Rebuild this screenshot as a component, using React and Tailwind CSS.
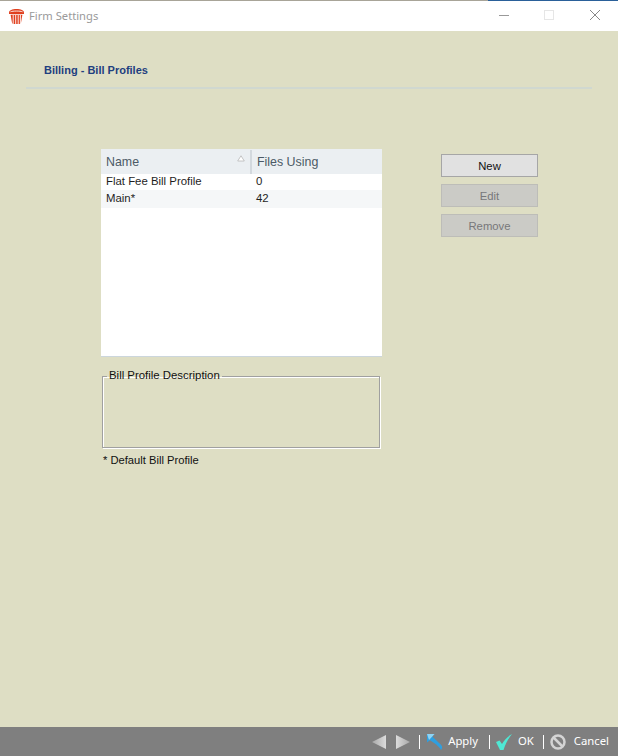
import React from "react";

const Font = '[font-family:"Liberation_Sans",Arial,sans-serif]';

function Trash() {
  return (
    <svg width="17" height="17" viewBox="0 0 17 17" className="shrink-0">
      <path d="M1 4.500C1 2.200 4.300 1 8.500 1S16 2.200 16 4.500V6H1z" fill="#e0401f" />
      <path d="M2.500 3.800c2-1 10-1 12 0" fill="none" stroke="#fff" strokeWidth="0.900" />
      <path d="M2.600 6.800h11.800L13 14.800c-.2.700-.6 1.100-1.200 1.100H5.200c-.6 0-1-.4-1.200-1.100z" fill="#e0401f" />
      <path d="M5.200 7v9M7.700 7v9M10.200 7v9M12.400 7v9" stroke="#fff" strokeWidth="0.900" />
    </svg>
  );
}

function Btn({ children, disabled }) {
  return (
    <button
      className={
        disabled
          ? "h-[23px] w-[97px] border border-[#bdbdb8] bg-[#cbcbc6] pt-[3px] text-[11.300px] leading-none text-[#77777a]"
          : "h-[23px] w-[97px] border border-[#a6a6a6] bg-[#e1e1e1] pt-[3px] text-[11.300px] leading-none text-[#111]"
      }
    >
      {children}
    </button>
  );
}

export default function App() {
  return (
    <div className={`flex h-[756px] w-[618px] flex-col overflow-hidden bg-[#dedec4] ${Font}`}>
      <div className="flex h-[31px] shrink-0 flex-col bg-white">
        <div className="flex h-px shrink-0">
          <div className="w-[488px] bg-[#a8a498]" />
          <div className="flex-1 bg-[#2a6099]" />
        </div>
        <div className="flex flex-1 items-center">
          <div className="ml-[8px] flex items-center gap-[4px]">
            <Trash />
            <span className="text-[11.200px] text-[#9a9a9a] [font-family:'Noto_Sans',sans-serif]">Firm Settings</span>
          </div>
          <div className="ml-auto flex items-center">
            <svg width="46" height="30" viewBox="0 0 46 30">
              <path d="M10 14.500h10" stroke="#999" strokeWidth="1" />
            </svg>
            <svg width="46" height="30" viewBox="0 0 46 30">
              <rect x="9.500" y="9.500" width="9" height="9" fill="none" stroke="#e6e6e6" />
            </svg>
            <svg width="37" height="30" viewBox="0 0 37 30">
              <path d="M9 9l10 10M19 9L9 19" stroke="#888" strokeWidth="1" />
            </svg>
          </div>
        </div>
      </div>

      <div className="flex min-h-0 flex-1 flex-col">
        <div className="pl-[44px] pt-[33px] text-[11px] font-bold leading-[13px] text-[#1f3f7f]">
          Billing - Bill Profiles
        </div>
        <div className="mx-[26px] mt-[10px] h-[2px] bg-[#d0d8d0]" />

        <div className="ml-[101px] mt-[60px] flex items-start">
          <div className="w-[281px]">
            <div className="h-[208px] border-b border-[#ccd6dc] bg-white text-[11.400px] leading-none text-[#1e1e1e]">
              <div className="flex h-[25px] items-center bg-[#ebeff2] pt-px text-[12.400px] text-[#4c5a66]">
                <div className="flex h-full w-[151px] items-center justify-between border-r-2 border-[#d3d9de] pl-[5px] pr-[5px]">
                  <span>Name</span>
                  <svg width="8" height="7" viewBox="0 0 8 7" className="mb-[7px]">
                    <path d="M4 .8L7.300 6H.7z" fill="#fff" stroke="#b8b8b8" strokeWidth="0.800" />
                  </svg>
                </div>
                <span className="pl-[5px]">Files Using</span>
              </div>
              <div className="flex h-[16px] items-start pt-[2px]">
                <span className="w-[151px] pl-[5px]">Flat Fee Bill Profile</span>
                <span className="pl-[4px]">0</span>
              </div>
              <div className="flex h-[18px] items-center bg-[#f5f7f8]">
                <span className="w-[151px] pl-[5px]">Main*</span>
                <span className="pl-[4px]">42</span>
              </div>
            </div>

            <fieldset className="ml-px mt-[13px] h-[78px] w-[278px] border border-[#a0a0a0] pl-[4px] [box-shadow:1px_1px_0_#fff,inset_1px_1px_0_#fff]">
              <legend className="-translate-y-px px-[2px] text-[11.400px] leading-[13px] text-[#111]">Bill Profile Description</legend>
            </fieldset>
            <div className="ml-[2px] mt-[6px] text-[11.200px] leading-[13px] text-[#111]">* Default Bill Profile</div>
          </div>

          <div className="ml-[59px] mt-[5px] flex flex-col gap-[7px]">
            <Btn>New</Btn>
            <Btn disabled>Edit</Btn>
            <Btn disabled>Remove</Btn>
          </div>
        </div>
      </div>

      <div className="flex h-[29px] shrink-0 items-center justify-end bg-[#7f7f7f] pr-[9px] text-[11.300px] text-white [font-family:'Noto_Sans',sans-serif]">
        <svg width="14" height="14" viewBox="0 0 14 14">
          <defs>
            <linearGradient id="a" x1="0" x2="1">
              <stop offset="0" stopColor="#a8a8a8" />
              <stop offset="1" stopColor="#dcdcdc" />
            </linearGradient>
          </defs>
          <path d="M0 7l14-7v14z" fill="url(#a)" />
        </svg>
        <svg width="14" height="14" viewBox="0 0 14 14" className="ml-[10px]">
          <defs>
            <linearGradient id="b" x1="0" x2="1">
              <stop offset="0" stopColor="#dcdcdc" />
              <stop offset="1" stopColor="#a8a8a8" />
            </linearGradient>
          </defs>
          <path d="M14 7L0 0v14z" fill="url(#b)" />
        </svg>
        <div className="ml-[9px] h-[14px] w-px bg-white" />
        <svg width="17" height="18" viewBox="0 0 17 18" className="ml-[6px]">
          <path d="M1 1h7.500L6.300 3.400 11 8c2.500 2.400 4.500 4 5 5.500.3 1 0 2.500-1 3.500-1-2-3-3.800-5-5.700L4 7.200 1 9.500z" fill="#2f9fe0" />
          <path d="M1 1h7.500L6.300 3.400 3 7z" fill="#8ed4f5" />
        </svg>
        <span className="ml-[5px]">Apply</span>
        <div className="ml-[11px] h-[14px] w-px bg-white" />
        <svg width="18" height="18" viewBox="0 0 18 18" className="ml-[5px]">
          <path d="M1 9l3.500-1.500 2.500 3.500C9.500 7 12.500 3.500 17 1c-3.500 4.500-6.500 9-8.500 16H5z" fill="#4fe8d4" />
        </svg>
        <span className="ml-[5px]">OK</span>
        <div className="ml-[9px] h-[14px] w-px bg-white" />
        <svg width="16" height="16" viewBox="0 0 16 16" className="ml-[6px]">
          <circle cx="8" cy="8" r="6.500" fill="none" stroke="#d4d4d4" strokeWidth="2.500" />
          <path d="M3.500 3.500l9 9" stroke="#d4d4d4" strokeWidth="2.500" />
        </svg>
        <span className="ml-[8px]">Cancel</span>
      </div>
    </div>
  );
}
